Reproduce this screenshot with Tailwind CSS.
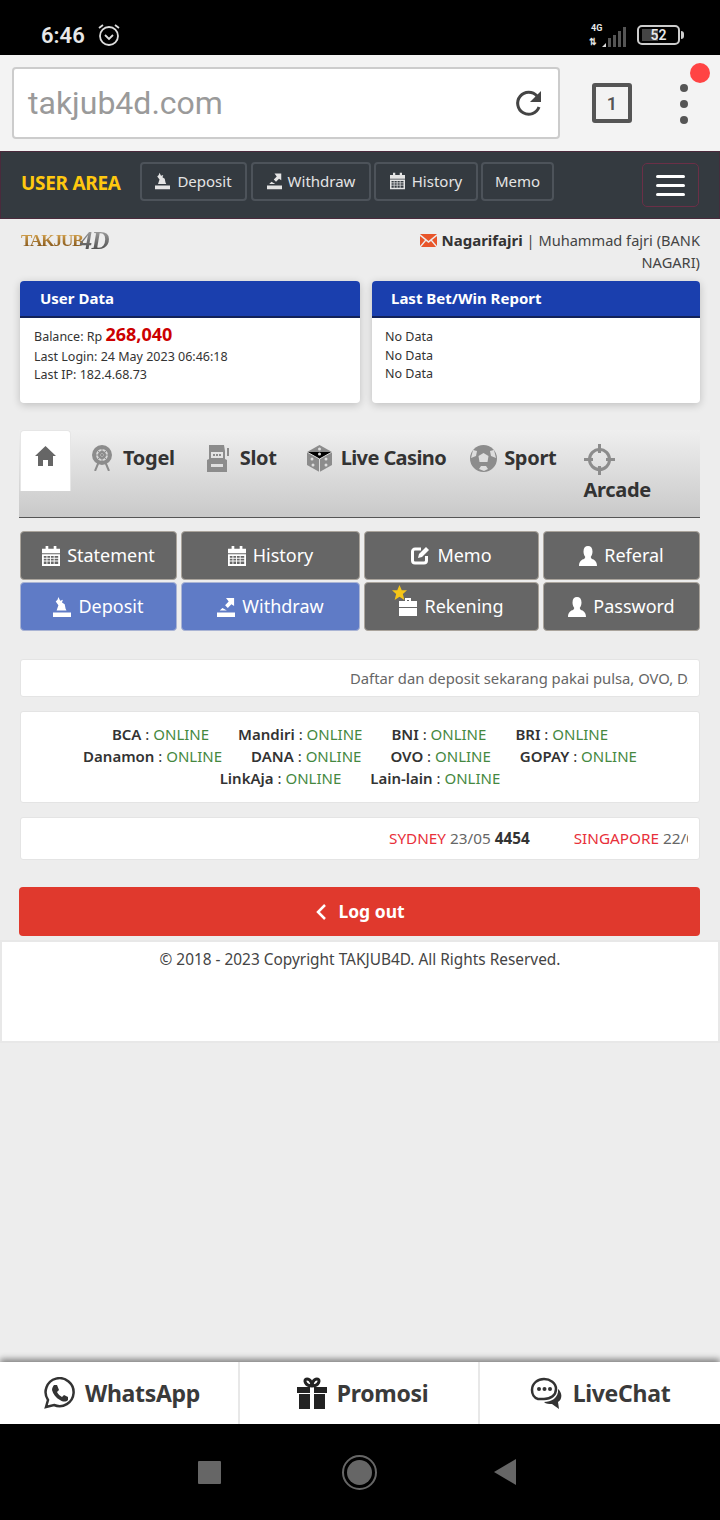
<!DOCTYPE html>
<html lang="id">
<head>
    <meta charset="UTF-8">
    <meta name="viewport" content="width=device-width, initial-scale=1.0">
    <title>takjub4d.com</title>
    <script src="https://cdn.jsdelivr.net/npm/@tailwindcss/browser@4"></script>
</head>
<body class="bg-[#ededed] font-['Noto_Sans',sans-serif] text-[#333] w-[720px] h-[1520px] overflow-hidden flex flex-col">
    <!-- icons used more than once -->
    <svg class="hidden">
        <symbol id="i-cal" viewBox="0 0 20 22"><path fill="currentColor" d="M4 0h3v3h6V0h3v3h4v5H0V3h4zM0 9h20v13H0zm2 2v2h3v-2zm4 0v2h3v-2zm4 0v2h3v-2zm4 0v2h4v-2zM2 14v2h3v-2zm4 0v2h3v-2zm4 0v2h3v-2zm4 0v2h4v-2zM2 17v3h3v-3zm4 0v3h3v-3zm4 0v3h3v-3zm4 0v3h4v-3z" fill-rule="evenodd"/></symbol>
        <symbol id="i-dep" viewBox="0 0 20 22"><path fill="currentColor" d="M0 17h20v5H0zM4 15l2-6-3-4 2-2 1-3 2 4 3-1-1 3 3 2 1 5 1 2z"/></symbol>
        <symbol id="i-wd" viewBox="0 0 20 22"><path fill="currentColor" d="M0 17h20v5H0zM10 1h9v9l-3-2-4 4-3-3 4-4zM3 15l3-3 5 3z"/></symbol>
        <symbol id="i-user" viewBox="0 0 20 22"><path fill="currentColor" d="M10 0c3 0 5 2 5 6 0 3-1 5-2 6l1 2c3 1 6 3 6 8H0c0-5 3-7 6-8l1-2C6 11 5 9 5 6c0-4 2-6 5-6z"/></symbol>
    </svg>

    <!-- status bar -->
    <div class="h-[55px] bg-black flex items-center pt-[15px] pl-[41px] pr-[36px] text-[#e8e8e8] shrink-0">
        <span class="text-[22px] font-semibold font-['Roboto',sans-serif]">6:46</span>
        <svg class="ml-[12px]" width="24" height="24" viewBox="0 0 24 24" fill="none" stroke="#ddd" stroke-width="1.8"><circle cx="12" cy="13" r="9"/><path d="M8 12l4 4 4-4M2 5l4-3M22 5l-4-3"/></svg>
        <div class="ml-auto flex items-center">
            <div class="relative w-[38px] h-[24px]">
                <span class="absolute left-[2px] -top-[1px] text-[9px] font-bold font-['Roboto',sans-serif]">4G</span>
                <span class="absolute left-0 bottom-0 text-[9px] font-bold font-['Roboto',sans-serif] leading-[10px]">⇅</span>
                <svg class="absolute right-0 bottom-0" width="26" height="20" viewBox="0 0 26 20" fill="#555"><path fill="#ddd" d="M1 20l4-4v4z"/><rect x="7" y="11" width="3" height="9"/><rect x="12" y="8" width="3" height="12"/><rect x="17" y="4" width="3" height="16"/><rect x="22" y="0" width="3" height="20"/></svg>
            </div>
            <div class="ml-[10px] w-[43px] h-[20px] border-[2px] border-[#ccc] rounded-[5px] relative flex items-center justify-center">
                <div class="absolute left-[3px] top-[2px] bottom-[2px] w-[16px] bg-[#444]"></div>
                <span class="relative text-[14px] font-semibold font-['Roboto',sans-serif]">52</span>
            </div>
            <div class="ml-[1px] w-[3px] h-[8px] bg-[#ccc] rounded-r"></div>
        </div>
    </div>

    <!-- browser bar -->
    <div class="h-[96px] bg-[#f3f3f3] flex items-center pl-[12px] relative shrink-0">
        <div class="w-[548px] h-[72px] bg-white border-2 border-[#ccc] rounded-[4px] flex items-center pl-[14px] pr-[14px]">
            <span class="text-[32px] text-[#9a9a9a] font-['Roboto',sans-serif]">takjub4d.com</span>
            <svg class="ml-auto" width="30" height="30" viewBox="0 0 30 30" fill="none"><path d="M25 19a11 11 0 1 1-2-11" stroke="#444" stroke-width="3"/><path d="M27 3v11H16z" fill="#444"/></svg>
        </div>
        <div class="ml-[32px] w-[40px] h-[40px] border-[4px] border-[#555] rounded-[3px] flex items-center justify-center text-[18px] font-semibold text-[#555] font-['Roboto',sans-serif]">1</div>
        <div class="ml-[48px] flex flex-col gap-[8px] mt-[2px]">
            <div class="w-[8px] h-[8px] rounded-full bg-[#555]"></div>
            <div class="w-[8px] h-[8px] rounded-full bg-[#555]"></div>
            <div class="w-[8px] h-[8px] rounded-full bg-[#555]"></div>
        </div>
        <div class="absolute left-[690px] top-[8px] w-[20px] h-[20px] rounded-full bg-[#ff4444]"></div>
    </div>

    <!-- user area nav -->
    <div class="h-[68px] bg-[#343a40] border border-[#4a2a3c] flex items-center pl-[20px] shrink-0">
        <span class="text-[19px] font-bold text-[#ffc80f] tracking-[-0.3px] w-[119px] mt-[-4px]">USER AREA</span>
        <div class="flex gap-[3px] text-[15px] text-[#e4e4e4] mb-[8px]">
            <a class="w-[107px] h-[39px] mr-[1px] flex items-center justify-center gap-[7px] border-2 border-[#4d535a] rounded-[4px]"><svg width="15" height="18"><use href="#i-dep"/></svg>Deposit</a>
            <a class="w-[120px] h-[39px] flex items-center justify-center gap-[6px] border-2 border-[#4d535a] rounded-[4px]"><svg width="15" height="18"><use href="#i-wd"/></svg>Withdraw</a>
            <a class="w-[104px] h-[39px] flex items-center justify-center gap-[7px] border-2 border-[#4d535a] rounded-[4px]"><svg width="15" height="18"><use href="#i-cal"/></svg>History</a>
            <a class="w-[73px] h-[39px] flex items-center justify-center border-2 border-[#4d535a] rounded-[4px]">Memo</a>
        </div>
        <div class="ml-auto mr-[20px] w-[57px] h-[44px] border border-[#6b2f47] rounded-[5px] flex flex-col items-center justify-center gap-[6px]">
            <div class="w-[29px] h-[3px] bg-white rounded-sm"></div>
            <div class="w-[29px] h-[3px] bg-white rounded-sm"></div>
            <div class="w-[29px] h-[3px] bg-white rounded-sm"></div>
        </div>
    </div>

    <!-- main content -->
    <main class="flex-1 flex flex-col min-h-0">
        <div class="flex justify-between h-[62px] pl-[21px] pr-[20px] pt-[10px]">
            <div class="flex items-center h-[22px] font-['Liberation_Serif',serif] font-bold leading-none tracking-[-0.6px]">
                <span class="text-[17px] text-transparent bg-clip-text bg-gradient-to-b from-[#e0ae55] to-[#7a4c12] tracking-[-1px]">TAKJUB</span><span class="text-[25px] ml-[-3px] text-transparent bg-clip-text bg-gradient-to-b from-[#aaa] to-[#444] italic">4D</span>
            </div>
            <div class="w-[290px] text-right text-[14.6px] leading-[22px] text-[#444]">
                <svg class="inline mr-[1px] mb-[3px]" width="17" height="13" viewBox="0 0 17 13"><path fill="#e8552a" d="M0 0h17L8.500 7zM0 2l5 4-5 6zM17 2l-5 4 5 6zM1 13l5-6 2.500 2 2.500-2 5 6z"/></svg>
                <b class="text-[#333] text-[15px]">Nagarifajri</b> | Muhammad fajri (BANK NAGARI)
            </div>
        </div>

        <div class="flex gap-[12px] pl-[20px] pr-[20px]">
            <div class="w-[340px] h-[122px] bg-white rounded-[4px] shadow-[0_2px_8px_rgba(0,0,0,0.2)] overflow-hidden">
                <div class="h-[37px] bg-[#1a3fae] border-b-2 border-[#122258] pl-[20px] text-white font-bold text-[15px] leading-[34px]">User Data</div>
                <div class="pl-[14px] pt-[7px] text-[12.5px] leading-[18px] text-[#333]">
                    <div class="h-[23px]">Balance: Rp <b class="text-[#cc0000] text-[18px]">268,040</b></div>
                    <div>Last Login: 24 May 2023 06:46:18</div>
                    <div>Last IP: 182.4.68.73</div>
                </div>
            </div>
            <div class="flex-1 h-[122px] bg-white rounded-[4px] shadow-[0_2px_8px_rgba(0,0,0,0.2)] overflow-hidden">
                <div class="h-[37px] bg-[#1a3fae] border-b-2 border-[#122258] pl-[19px] text-white font-bold text-[15px] leading-[34px]">Last Bet/Win Report</div>
                <div class="pl-[13px] pt-[10px] text-[12.5px] leading-[18.500px] text-[#333]">
                    <div>No Data</div>
                    <div>No Data</div>
                    <div>No Data</div>
                </div>
            </div>
        </div>

        <!-- game tabs -->
        <div class="mt-[27px] ml-[19px] w-[681px] h-[88px] bg-gradient-to-b from-[#efefef] to-[#c9c9c9] border-b border-[#555] flex items-start text-[20px] font-bold text-[#333]">
            <div class="ml-[1px] w-[51px] h-[61px] bg-white rounded-t-[4px] border border-b-0 border-[#e6e6e6] flex justify-center pt-[15px]">
                <svg width="21" height="20" viewBox="0 0 21 20"><path fill="#666" d="M10.500 0L21 10h-3v10h-5v-6H8v6H3V10H0z"/></svg>
            </div>
            <div class="ml-[20px] mt-[13px] flex items-center gap-[10px]">
                <svg width="22" height="26" viewBox="0 0 22 26" fill="none" stroke="#8c8c8c"><path d="M9 14L4 26M13 14l5 12" stroke-width="2"/><circle cx="11" cy="10" r="8" stroke-width="4" fill="#d8d8d8"/><circle cx="11" cy="10" r="3" stroke-width="2"/><path d="M11 2v16M3 10h16M5.500 4.500l11 11M16.500 4.500l-11 11" stroke-width="1"/></svg>
                <span class="tracking-[-0.3px]">Togel</span>
            </div>
            <div class="ml-[32px] mt-[13px] flex items-center gap-[10px]">
                <svg width="23" height="27" viewBox="0 0 23 27"><path fill="#8c8c8c" d="M2 0h15l1 6v8l2 1v12H0V15l2-1zM4 7v6h12V7zM4 19v3h12v-3z" fill-rule="evenodd"/><path fill="#8c8c8c" d="M6 9h2v2H6zM9 9h2v2H9zM12 9h2v2h-2z"/><path stroke="#8c8c8c" stroke-width="2" d="M21 3v8"/></svg>
                <span class="tracking-[-0.3px]">Slot</span>
            </div>
            <div class="ml-[30px] mt-[13px] flex items-center gap-[9px]">
                <svg width="25" height="27" viewBox="0 0 25 27"><path fill="#8c8c8c" d="M12.500 0L25 7v13l-12.500 7L0 20V7z"/><path stroke="#ddd" d="M0 7l12.500 7L25 7M12.500 14v13"/><g fill="#ddd"><circle cx="12.500" cy="4" r="1.500"/><circle cx="12.500" cy="9" r="1.500"/><circle cx="5" cy="14" r="1.500"/><circle cx="6" cy="20" r="1.500"/><circle cx="19" cy="14" r="1.500"/><circle cx="19" cy="20" r="1.500"/></g></svg>
                <span class="tracking-[-0.6px] whitespace-nowrap">Live Casino</span>
            </div>
            <div class="ml-[24px] mt-[13px] flex items-center gap-[7px]">
                <svg width="27" height="27" viewBox="0 0 27 27"><circle cx="13.500" cy="13.500" r="13.500" fill="#8c8c8c"/><path fill="#ddd" d="M13.500 8l5 3-1 6h-8l-1-6zM3 5l4 1-1 5-5 2zM24 5l-4 1 1 5 5 2zM9 24l2-3h5l2 3-4 2z"/></svg>
                <span class="tracking-[-0.3px]">Sport</span>
            </div>
            <div class="ml-[27px] mt-[14px] flex flex-col items-start">
                <svg class="ml-[1px]" width="31" height="31" viewBox="0 0 31 31" fill="none" stroke="#8c8c8c" stroke-width="3"><circle cx="15.500" cy="15.500" r="10"/><path d="M15.500 0v9M15.500 22v9M0 15.500h9M22 15.500h9"/></svg>
                <span class="tracking-[-0.3px]">Arcade</span>
            </div>
        </div>

        <!-- account buttons -->
        <div class="mt-[13px] ml-[20px] grid grid-cols-[157px_179px_175px_157px] gap-x-[4px] gap-y-[2px] text-[18px] text-white w-[680px]">
            <a class="h-[49px] bg-[#666] border border-[#aaa49c] rounded-[4px] flex items-center justify-center gap-[7px]"><svg width="18" height="20"><use href="#i-cal"/></svg>Statement</a>
            <a class="h-[49px] bg-[#666] border border-[#aaa49c] rounded-[4px] flex items-center justify-center gap-[7px]"><svg width="18" height="20"><use href="#i-cal"/></svg>History</a>
            <a class="h-[49px] bg-[#666] border border-[#aaa49c] rounded-[4px] flex items-center justify-center gap-[7px]"><svg width="19" height="19" viewBox="0 0 19 19" fill="none"><path d="M10 3H4a2.500 2.500 0 0 0-2.500 2.500v9A2.500 2.500 0 0 0 4 17h9a2.500 2.500 0 0 0 2.500-2.500V10" stroke="#fff" stroke-width="3"/><path d="M7 12l1-4 7-7 3 3-7 7z" fill="#fff"/></svg>Memo</a>
            <a class="h-[49px] bg-[#666] border border-[#aaa49c] rounded-[4px] flex items-center justify-center gap-[7px]"><svg width="18" height="20"><use href="#i-user"/></svg>Referal</a>
            <a class="h-[49px] bg-[#5f7bc6] border border-[#aab4d4] rounded-[4px] flex items-center justify-center gap-[7px]"><svg width="18" height="20"><use href="#i-dep"/></svg>Deposit</a>
            <a class="h-[49px] bg-[#5f7bc6] border border-[#aab4d4] rounded-[4px] flex items-center justify-center gap-[7px]"><svg width="18" height="20"><use href="#i-wd"/></svg>Withdraw</a>
            <a class="relative h-[49px] bg-[#666] border border-[#aaa49c] rounded-[4px] flex items-center justify-center gap-[7px]">
                <svg class="absolute left-[27px] top-[2px]" width="15" height="15" viewBox="0 0 20 20"><path fill="#f5c518" d="M10 0l3 7h7l-5.500 5 2 8L10 15.500 3.500 20l2-8L0 7h7z"/></svg>
                <svg width="18" height="18" viewBox="0 0 18 18"><path fill="#fff" d="M6 0h6v3h6v6H0V3h6zM8 2v1h2V2zM0 10h18v8H0z"/></svg>Rekening</a>
            <a class="h-[49px] bg-[#666] border border-[#aaa49c] rounded-[4px] flex items-center justify-center gap-[7px]"><svg width="18" height="20"><use href="#i-user"/></svg>Password</a>
        </div>

        <!-- running text -->
        <div class="mt-[28px] mx-[20px] h-[38px] bg-white border border-[#e4e4e4] rounded-[3px] px-[11px] flex items-center">
            <div class="overflow-hidden whitespace-nowrap w-full pl-[318px] text-[14.8px] text-[#666]">Daftar dan deposit sekarang pakai pulsa, OVO, DANA</div>
        </div>

        <!-- bank status -->
        <div class="mt-[14px] mx-[20px] h-[92px] bg-white border border-[#e4e4e4] rounded-[3px] pt-[11px] text-center text-[15px] leading-[22px]">
            <div class="flex justify-center gap-[29px]"><span><b class="font-semibold">BCA</b> : <span class="text-[#45883f]">ONLINE</span></span><span><b class="font-semibold">Mandiri</b> : <span class="text-[#45883f]">ONLINE</span></span><span><b class="font-semibold">BNI</b> : <span class="text-[#45883f]">ONLINE</span></span><span><b class="font-semibold">BRI</b> : <span class="text-[#45883f]">ONLINE</span></span></div>
            <div class="flex justify-center gap-[29px]"><span><b class="font-semibold">Danamon</b> : <span class="text-[#45883f]">ONLINE</span></span><span><b class="font-semibold">DANA</b> : <span class="text-[#45883f]">ONLINE</span></span><span><b class="font-semibold">OVO</b> : <span class="text-[#45883f]">ONLINE</span></span><span><b class="font-semibold">GOPAY</b> : <span class="text-[#45883f]">ONLINE</span></span></div>
            <div class="flex justify-center gap-[29px]"><span><b class="font-semibold">LinkAja</b> : <span class="text-[#45883f]">ONLINE</span></span><span><b class="font-semibold">Lain-lain</b> : <span class="text-[#45883f]">ONLINE</span></span></div>
        </div>

        <!-- results ticker -->
        <div class="mt-[14px] mx-[20px] h-[43px] bg-white border border-[#e4e4e4] rounded-[3px] px-[11px] flex items-center">
            <div class="overflow-hidden whitespace-nowrap w-full pl-[357px] text-[15.3px] text-[#666]"><span class="text-[#e8303a]">SYDNEY</span> 23/05 <b class="text-[#333]">4454</b><span class="text-[#e8303a] ml-[44px]">SINGAPORE</span> 22/05 <b class="text-[#333]">1187</b></div>
        </div>

        <a class="mt-[27px] ml-[19px] w-[681px] h-[49px] bg-[#e0392d] rounded-[4px] flex items-center justify-center gap-[11px] pl-[2px] text-white font-bold text-[17.5px]">
            <svg width="11" height="16" viewBox="0 0 11 16" fill="none" stroke="#fff" stroke-width="2.500"><path d="M9 1L2 8l7 7"/></svg>Log out</a>

        <footer class="mt-[4px] h-[103px] bg-white border-2 border-[#e8e8e8] text-center text-[15.4px] text-[#444] pt-[6px]">© 2018 - 2023 Copyright TAKJUB4D. All Rights Reserved.</footer>
    </main>

    <!-- bottom bar -->
    <div class="h-[62px] bg-white grid grid-cols-3 shadow-[0_-3px_6px_rgba(0,0,0,0.45)] relative shrink-0 text-[23px] font-bold text-[#3a3a3a] tracking-[-0.3px]">
        <a class="flex items-center justify-center gap-[10px] pl-[5px] border-r-2 border-[#e8e8e8]">
            <svg width="32" height="32" viewBox="0 0 32 32" fill="none" stroke="#333" stroke-width="2.500"><path d="M3 30l2-7A14 14 0 1 1 11 28z"/><path fill="#333" stroke="none" d="M11 8l3 0 2 5-2 2c1 2 3 4 5 5l2-2 4 2v3c-2 2-5 2-8 0-4-2-7-6-8-10 0-2 1-4 2-5z"/></svg>WhatsApp</a>
        <a class="flex items-center justify-center gap-[10px] pl-[7px] border-r-2 border-[#e8e8e8]">
            <svg width="30" height="32" viewBox="0 0 30 32"><path fill="#222" d="M0 10h13v6H0zM17 10h13v6H17zM2 17h11v15H2zM17 17h11v15H17z"/><path fill="none" stroke="#222" stroke-width="3" d="M15 9C8 9 6 2 10 2s5 5 5 7c0-2 1-7 5-7s2 7-5 7z"/></svg>Promosi</a>
        <a class="flex items-center justify-center gap-[9px]">
            <svg width="34" height="32" viewBox="0 0 34 32"><path fill="none" stroke="#333" stroke-width="2.500" d="M8 22c-4-1-6-5-6-9C2 6 8 2 14 2s12 4 12 10-5 10-12 10H8z"/><g fill="#333"><circle cx="9" cy="12" r="2"/><circle cx="14.500" cy="12" r="2"/><circle cx="20" cy="12" r="2"/></g><path fill="#333" d="M28 12c4 3 5 10 0 13l1 7-7-5c-3 0-6 0-8-2 7 0 15-4 14-13z"/></svg>LiveChat</a>
    </div>

    <!-- android nav -->
    <div class="h-[96px] bg-black flex items-center shrink-0 relative">
        <div class="ml-[198px] w-[23px] h-[23px] bg-[#666] rounded-[1px]"></div>
        <div class="ml-[121px] w-[35px] h-[35px] rounded-full border-2 border-[#666] flex items-center justify-center">
            <div class="w-[25px] h-[25px] rounded-full bg-[#666]"></div>
        </div>
        <svg class="ml-[117px]" width="22" height="26" viewBox="0 0 22 26"><path fill="#666" d="M22 0v26L0 13z"/></svg>
    </div>
</body>
</html>
